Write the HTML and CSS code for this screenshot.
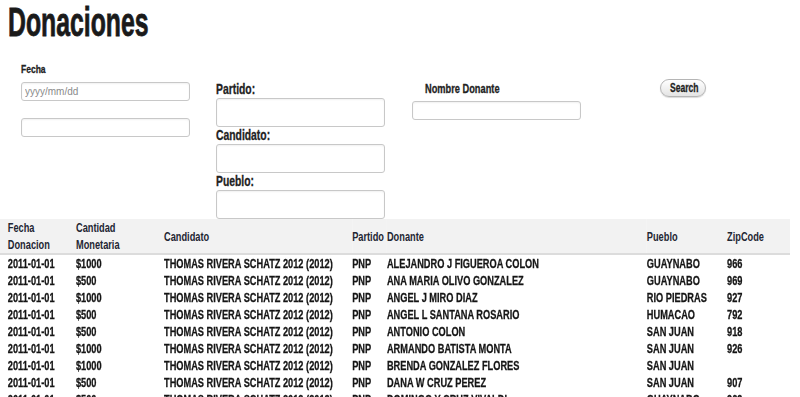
FILE: index.html
```html
<!DOCTYPE html>
<html lang="es">
<head>
  <meta charset="UTF-8">
  <title>Donaciones</title>
  <link rel="stylesheet" href="styles.css">
</head>
<body>
  <h1 class="title"><span class="narrow">Donaciones</span></h1>

  <form class="filters">
    <div class="col col-fecha">
      <label for="fecha">Fecha</label>
      <input type="text" id="fecha" class="small" placeholder="yyyy/mm/dd">
      <input type="text" id="fecha2" class="small second">
    </div>
    <div class="col col-mid">
      <label for="partido">Partido:</label>
      <input type="text" id="partido" class="big">
      <label for="candidato">Candidato:</label>
      <input type="text" id="candidato" class="big">
      <label for="pueblo">Pueblo:</label>
      <input type="text" id="pueblo" class="big">
    </div>
    <div class="col col-nombre">
      <label for="nombre">Nombre Donante</label>
      <input type="text" id="nombre" class="small">
    </div>
    <div class="col col-btn">
      <button type="button" class="search-btn"><span class="narrow">Search</span></button>
    </div>
  </form>

  <!-- la tabla se comprime a lo ancho para imitar la letra condensada -->
  <div class="table-wrap">
    <table class="donaciones">
      <colgroup>
        <col class="c-fecha">
        <col class="c-cant">
        <col class="c-cand">
        <col class="c-part">
        <col class="c-don">
        <col class="c-pueblo">
        <col class="c-zip">
      </colgroup>
      <thead>
        <tr>
          <th>Fecha<br>Donacion</th>
          <th>Cantidad<br>Monetaria</th>
          <th>Candidato</th>
          <th>Partido</th>
          <th>Donante</th>
          <th>Pueblo</th>
          <th>ZipCode</th>
        </tr>
      </thead>
      <tbody>
        <tr><td>2011-01-01</td><td>$1000</td><td>THOMAS RIVERA SCHATZ 2012 (2012)</td><td>PNP</td><td>ALEJANDRO J FIGUEROA COLON</td><td>GUAYNABO</td><td>966</td></tr>
        <tr><td>2011-01-01</td><td>$500</td><td>THOMAS RIVERA SCHATZ 2012 (2012)</td><td>PNP</td><td>ANA MARIA OLIVO GONZALEZ</td><td>GUAYNABO</td><td>969</td></tr>
        <tr><td>2011-01-01</td><td>$1000</td><td>THOMAS RIVERA SCHATZ 2012 (2012)</td><td>PNP</td><td>ANGEL J MIRO DIAZ</td><td>RIO PIEDRAS</td><td>927</td></tr>
        <tr><td>2011-01-01</td><td>$500</td><td>THOMAS RIVERA SCHATZ 2012 (2012)</td><td>PNP</td><td>ANGEL L SANTANA ROSARIO</td><td>HUMACAO</td><td>792</td></tr>
        <tr><td>2011-01-01</td><td>$500</td><td>THOMAS RIVERA SCHATZ 2012 (2012)</td><td>PNP</td><td>ANTONIO COLON</td><td>SAN JUAN</td><td>918</td></tr>
        <tr><td>2011-01-01</td><td>$1000</td><td>THOMAS RIVERA SCHATZ 2012 (2012)</td><td>PNP</td><td>ARMANDO BATISTA MONTA</td><td>SAN JUAN</td><td>926</td></tr>
        <tr><td>2011-01-01</td><td>$1000</td><td>THOMAS RIVERA SCHATZ 2012 (2012)</td><td>PNP</td><td>BRENDA GONZALEZ FLORES</td><td>SAN JUAN</td><td></td></tr>
        <tr><td>2011-01-01</td><td>$500</td><td>THOMAS RIVERA SCHATZ 2012 (2012)</td><td>PNP</td><td>DANA W CRUZ PEREZ</td><td>SAN JUAN</td><td>907</td></tr>
        <tr><td>2011-01-01</td><td>$500</td><td>THOMAS RIVERA SCHATZ 2012 (2012)</td><td>PNP</td><td>DOMINGO Y CRUZ VIVALDI</td><td>GUAYNABO</td><td>969</td></tr>
      </tbody>
    </table>
  </div>
</body>
</html>
```

FILE: styles.css
```css
body {
  margin: 0;
  font-family: "Liberation Sans", Arial, sans-serif;
  color: #1c1c1c;
  background: #fff;
  overflow: hidden;
}
.narrow {
  display: inline-block;
  transform-origin: left center;
}
.title {
  margin: 0 0 0 8px;
  font-size: 40px;
  line-height: 44px;
  font-weight: bold;
  color: #1a1a1a;
  -webkit-text-stroke: 0.8px #1a1a1a;
}
.title .narrow {
  transform: scaleX(0.62);
}
.filters {
  display: flex;
  align-items: flex-start;
  padding-left: 21px;
}
.col {
  display: flex;
  flex-direction: column;
  align-items: flex-start;
  width: 169px;
}
.col label {
  font-weight: bold;
  color: #222;
  -webkit-text-stroke: 0.3px #222;
  transform-origin: left center;
  transform: scaleX(0.74);
  white-space: nowrap;
}
.col-fecha {
  padding-top: 18px;
}
.col-fecha label {
  font-size: 11.5px;
  line-height: 14px;
}
.col-mid {
  margin-left: 26px;
  padding-top: 37px;
}
.col-mid label {
  font-size: 14px;
  line-height: 17px;
}
.col-nombre {
  margin-left: 27px;
  padding-top: 37px;
}
.col-nombre label {
  font-size: 12.5px;
  line-height: 17px;
  margin-left: 13px;
}
.col-btn {
  width: auto;
  margin-left: 79px;
  padding-top: 35px;
}
input {
  box-sizing: border-box;
  width: 169px;
  margin: 0;
  padding: 0 3px;
  border: 1px solid #c8c8c8;
  border-radius: 3px;
  box-shadow: inset 0 1px 2px rgba(0, 0, 0, 0.06);
  font-family: inherit;
  font-size: 10px;
  color: #333;
  background: #fff;
}
input::placeholder {
  color: #8a8a8a;
}
input.small {
  height: 19px;
  margin-top: 6px;
}
input.small.second {
  margin-top: 17px;
}
.col-nombre input.small {
  margin-top: 3px;
}
input.big {
  height: 29px;
}
.search-btn {
  height: 18px;
  width: 46px;
  padding: 0 0 0 9px;
  border: 1px solid #b5b5b5;
  border-radius: 9px;
  background: linear-gradient(#ffffff, #e4e4e4);
  box-shadow: 0 1px 1px rgba(0, 0, 0, 0.15);
  font-family: inherit;
  font-size: 12px;
  font-weight: bold;
  color: #222;
  -webkit-text-stroke: 0.3px #222;
  text-align: left;
}
.search-btn .narrow {
  transform: scaleX(0.71);
}
.table-wrap {
  width: 800px;
  overflow: hidden;
}
.donaciones {
  border-collapse: collapse;
  table-layout: fixed;
  width: 1113px;
  transform-origin: left top;
  transform: scaleX(0.71);
}
.c-fecha { width: 107px; }
.c-cant { width: 124px; }
.c-cand { width: 265px; }
.c-part { width: 49px; }
.c-don { width: 366px; }
.c-pueblo { width: 113px; }
.c-zip { width: 89px; }
.donaciones th {
  background: #f2f2f2;
  border-bottom: 2px solid #dcdcdc;
  text-align: left;
  font-size: 13px;
  line-height: 17px;
  font-weight: bold;
  color: #1f2633;
  padding: 0;
  white-space: nowrap;
}
.donaciones td {
  font-size: 13px;
  line-height: 17px;
  font-weight: bold;
  color: #141414;
  -webkit-text-stroke: 0.3px #141414;
  padding: 0;
  white-space: nowrap;
  overflow: hidden;
}
.donaciones th:first-child,
.donaciones td:first-child {
  padding-left: 11px;
}
```
